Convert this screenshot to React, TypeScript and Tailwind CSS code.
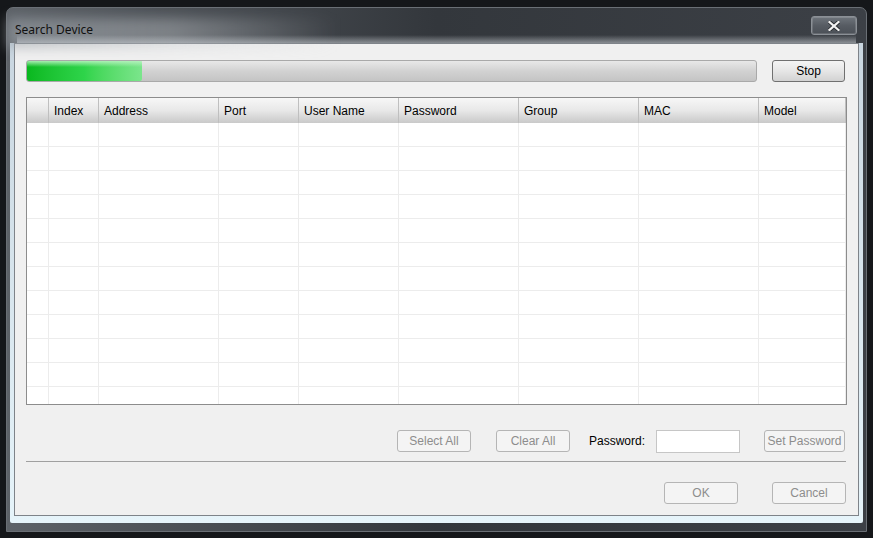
import React from "react";

const columns = [
  { label: "", width: 22 },
  { label: "Index", width: 50 },
  { label: "Address", width: 120 },
  { label: "Port", width: 80 },
  { label: "User Name", width: 100 },
  { label: "Password", width: 120 },
  { label: "Group", width: 120 },
  { label: "MAC", width: 120 },
  { label: "Model", width: 87 },
];

const rows = Array.from({ length: 12 }, (_, i) => i);

const WinButton = ({
  label,
  width,
  disabled,
}: {
  label: string;
  width: number;
  disabled?: boolean;
}) => (
  <button
    type="button"
    style={{ width }}
    className={
      "h-[22px] shrink-0 rounded-[3px] border text-[12px] leading-none " +
      (disabled
        ? "border-[#b5b5b5] bg-[#f4f4f4] text-[#8d8d8d]"
        : "border-[#707070] bg-gradient-to-b from-[#f4f4f4] via-[#e6e6e6] to-[#d2d2d2] text-black")
    }
  >
    {label}
  </button>
);

export default function App() {
  return (
    <div
      className="flex h-[538px] w-[873px] bg-[#15171a] pl-[6px] pt-[7px]"
      style={{ fontFamily: '"Liberation Sans", Arial, sans-serif' }}
    >
      {/* window frame */}
      <div className="relative flex h-[525px] w-[861px] flex-col rounded-t-[7px] border border-[#6a6f75] bg-gradient-to-r from-[#5d6268] via-[#33373c] to-[#3c4046] pb-[8px]">
        {/* title bar */}
        <div className="relative flex h-[35px] items-start px-[8px] pt-[13px]">
          <div className="pointer-events-none absolute left-0 top-[10px] h-[30px] w-[330px] bg-gradient-to-r from-[#9aa0a6]/60 via-[#c4c8cc]/40 to-transparent blur-[6px]" />
          <div className="pointer-events-none absolute bottom-0 left-[10px] right-[10px] h-[8px] bg-gradient-to-b from-transparent to-[#d8dde2]/50" />
          <span
            className="relative text-[12px] text-[#111]"
            style={{ fontFamily: '"Noto Sans", "Open Sans", sans-serif' }}
          >
            Search Device
          </span>
          <div className="absolute right-[9px] top-[8px] flex h-[19px] w-[46px] items-center justify-center rounded-[3px] border border-[#8b9096] bg-gradient-to-b from-[#6f757c] via-[#575c63] to-[#4b5057] shadow-[inset_0_0_0_1px_rgba(255,255,255,0.15)]">
            <svg width="12" height="10" viewBox="0 0 12 10">
              <path
                d="M1.5 1 L10.5 9 M10.5 1 L1.5 9"
                stroke="#2a2d31"
                strokeWidth="4"
                strokeLinecap="square"
              />
              <path
                d="M1.5 1 L10.5 9 M10.5 1 L1.5 9"
                stroke="#f2f2f2"
                strokeWidth="2.2"
                strokeLinecap="square"
              />
            </svg>
          </div>
        </div>

        {/* client area framed by light glass edge */}
        <div className="mx-[3px] flex flex-1 flex-col rounded-b-[2px] bg-gradient-to-b from-[#c9d6e0] to-[#e6f4fa] px-[4px] pb-[7px]">
          <div className="flex h-[473px] flex-col border border-[#7e8389] bg-[#f0f0f0] pl-[11px] pr-[10px] pt-[16px]">
            {/* progress row */}
            <div className="flex h-[22px] items-center">
              <div className="relative h-[22px] w-[731px] overflow-hidden rounded-[3px] border border-[#a9a9a9] bg-gradient-to-b from-[#e8e8e8] via-[#d2d2d2] to-[#c4c4c4]">
                <div className="h-full w-[115px] rounded-r-[2px] bg-gradient-to-r from-[#08b81e] via-[#2ed44a] to-[#7be58c]">
                  <div className="h-[6px] bg-gradient-to-b from-[#b8f3c0]/90 to-transparent" />
                </div>
              </div>
              <div className="ml-auto mr-[3px] flex">
                <WinButton label="Stop" width={73} />
              </div>
            </div>

            {/* table */}
            <div className="mt-[15px] h-[308px] w-[821px] overflow-hidden border border-[#8c8c8c] bg-white">
              <div className="flex h-[25px] bg-gradient-to-b from-[#f7f7f7] via-[#e8e8e8] to-[#c9c9c9]">
                {columns.map((c, i) => (
                  <div
                    key={i}
                    style={{ width: c.width }}
                    className="flex shrink-0 items-center border-r border-[#bfbfbf] pl-[5px] text-[12px] text-black"
                  >
                    {c.label}
                  </div>
                ))}
              </div>
              {rows.map((r) => (
                <div key={r} className="flex h-[24px] border-b border-[#ececec]">
                  {columns.map((c, i) => (
                    <div
                      key={i}
                      style={{ width: c.width }}
                      className="shrink-0 border-r border-[#ececec]"
                    />
                  ))}
                </div>
              ))}
            </div>

            {/* password row */}
            <div className="mt-[25px] flex h-[22px] items-center">
              <div className="ml-[371px] flex">
                <WinButton label="Select All" width={74} disabled />
              </div>
              <div className="ml-[25px] flex">
                <WinButton label="Clear All" width={74} disabled />
              </div>
              <span className="ml-[19px] text-[12px] text-black">Password:</span>
              <div className="ml-[11px] h-[23px] w-[84px] border border-[#c6c6c6] bg-white" />
              <div className="ml-[24px] flex">
                <WinButton label="Set Password" width={81} disabled />
              </div>
            </div>

            {/* separator */}
            <div className="mt-[9px] h-[2px] w-[820px] border-t border-[#a0a0a0] border-b-white" />

            {/* ok / cancel */}
            <div className="mt-[19px] flex h-[22px] items-center">
              <div className="ml-[638px] flex">
                <WinButton label="OK" width={74} disabled />
              </div>
              <div className="ml-[34px] flex">
                <WinButton label="Cancel" width={74} disabled />
              </div>
            </div>
          </div>
        </div>
      </div>
    </div>
  );
}
